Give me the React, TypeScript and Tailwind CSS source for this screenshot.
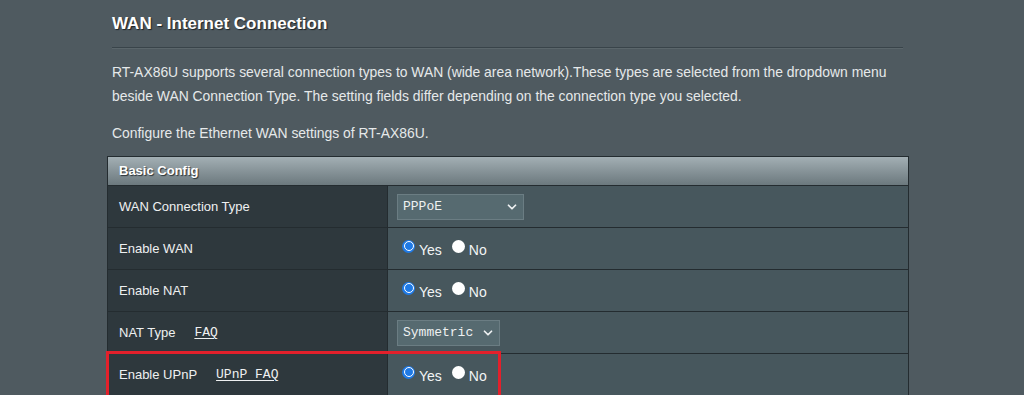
import { ChevronDown } from "lucide-react"

const SANS = "font-['Liberation_Sans',Arial,sans-serif]"
const MONO = "font-['Liberation_Mono','Courier_New',monospace]"

function Radio({ checked }: { checked: boolean }) {
  if (checked) {
    return (
      <span className="mt-[-5px] inline-flex h-[13px] w-[13px] items-center justify-center rounded-full bg-[#1f7ae6]">
        <span className="h-[10px] w-[10px] rounded-full border-[1.5px] border-white bg-[#1f7ae6]" />
      </span>
    )
  }
  return <span className="mt-[-5px] inline-block h-[13px] w-[13px] rounded-full bg-white" />
}

function YesNo() {
  return (
    <div className="ml-[5px] flex items-center text-[14px] text-[#f2f4f5]">
      <Radio checked />
      <span className="ml-[4px] mt-[3px]">Yes</span>
      <span className="ml-[10px] flex">
        <Radio checked={false} />
      </span>
      <span className="ml-[4px] mt-[3px]">No</span>
    </div>
  )
}

function Select({ value, width }: { value: string; width: string }) {
  return (
    <div
      className={`flex h-[26px] items-center justify-between border border-[#6b7d83] bg-[#566a70] pl-[5px] pr-[4px] text-[13px] text-[#eef1f2] ${MONO} ${width}`}
    >
      <span>{value}</span>
      <ChevronDown className="h-[14px] w-[14px]" strokeWidth={3} />
    </div>
  )
}

function Row({
  label,
  link,
  children,
}: {
  label: string
  link?: string
  children: React.ReactNode
}) {
  return (
    <div className="flex h-[42px] border-b border-[#242c30]">
      <div className="flex w-[280px] items-center border-r border-[#242c30] bg-[#2e383d] pl-[11px] text-[13px] text-[#eef0f1]">
        <span>{label}</span>
        {link && (
          <span className={`ml-[19px] text-[13px] underline underline-offset-2 ${MONO}`}>{link}</span>
        )}
      </div>
      <div className="flex flex-1 items-center bg-[#47575d] pl-[9px]">{children}</div>
    </div>
  )
}

export default function App() {
  return (
    <div className={`h-[395px] w-[1024px] overflow-hidden bg-[#4f5a60] ${SANS}`}>
      <div className="relative ml-[107px] w-[802px]">
        <div className="pl-[5px]">
          <h1 className="pt-[13px] text-[17px] font-bold leading-[22px] text-white [text-shadow:1px_1px_1px_#1c2225]">
            WAN - Internet Connection
          </h1>
          <div className="mt-[12px] mr-[6px] h-[2px] border-t border-[#39444a] bg-[#5b666b]" />
          <p className="mt-[11px] text-[13.9px] leading-[24px] text-[#e6e9ea]">
            RT-AX86U supports several connection types to WAN (wide area network).These types are selected from the dropdown menu
            <br />
            beside WAN Connection Type. The setting fields differ depending on the connection type you selected.
          </p>
          <p className="mt-[13px] text-[13.9px] leading-[24px] text-[#e6e9ea]">
            Configure the Ethernet WAN settings of RT-AX86U.
          </p>
        </div>

        <div className="mt-[11px] border-x border-t border-[#242c30]">
          <div className="flex h-[29px] items-center border-b border-[#242c30] bg-gradient-to-b from-[#a3afb4] to-[#6c797e] pl-[11px] text-[13px] font-bold text-white [text-shadow:1px_1px_1px_#2a3236]">
            Basic Config
          </div>
          <Row label="WAN Connection Type">
            <Select value="PPPoE" width="w-[127px]" />
          </Row>
          <Row label="Enable WAN">
            <YesNo />
          </Row>
          <Row label="Enable NAT">
            <YesNo />
          </Row>
          <Row label="NAT Type" link="FAQ">
            <Select value="Symmetric" width="w-[103px]" />
          </Row>
          <Row label="Enable UPnP" link="UPnP FAQ">
            <YesNo />
          </Row>
        </div>

        {/* highlight box around the UPnP row */}
        <div className="pointer-events-none absolute left-[-1px] top-[351px] h-[50px] w-[395px] border-[3px] border-[#e3202b]" />
      </div>
    </div>
  )
}
